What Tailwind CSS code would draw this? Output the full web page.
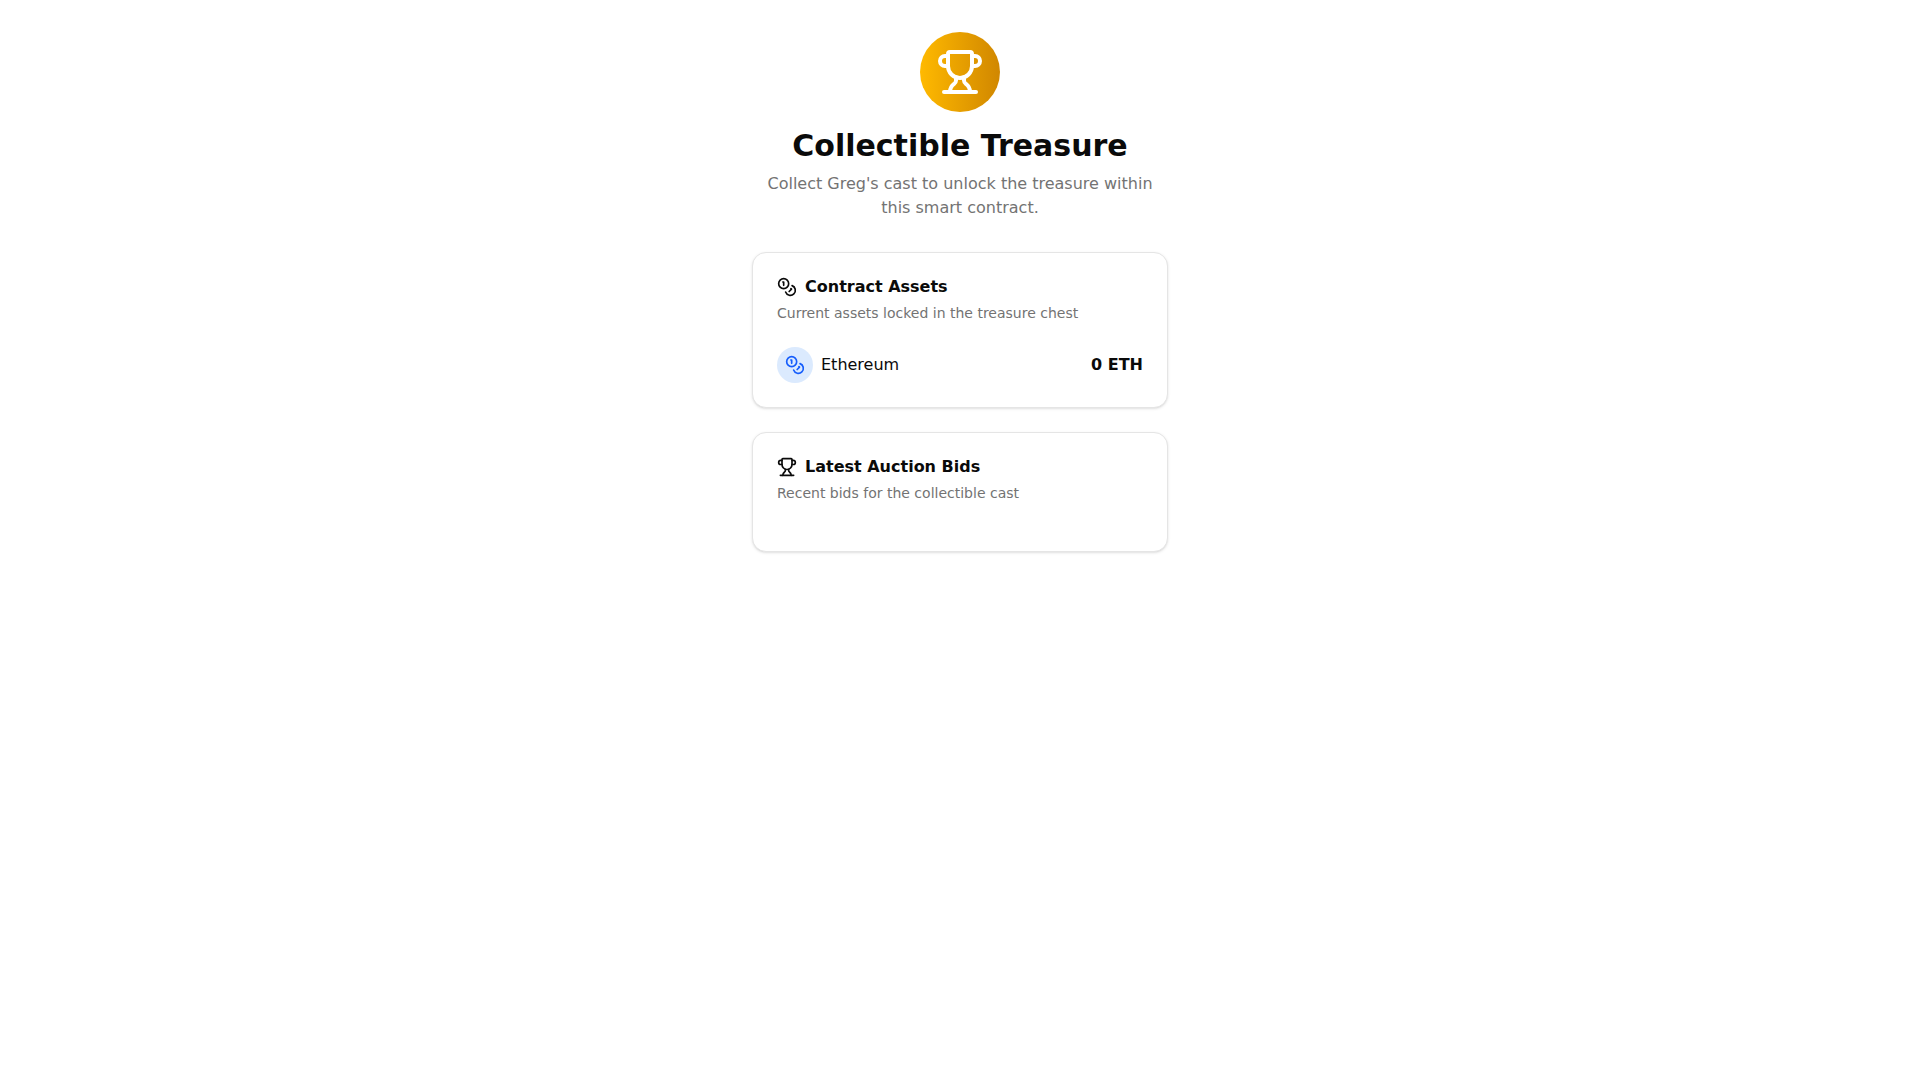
<!DOCTYPE html>
<html lang="en">
<head>
  <meta charset="UTF-8">
  <meta name="viewport" content="width=device-width, initial-scale=1.0">
  <title>Collectible Treasure</title>
  <script src="https://cdn.jsdelivr.net/npm/@tailwindcss/browser@4"></script>
</head>
<body class="bg-white text-neutral-950 font-['DejaVu_Sans',sans-serif]">
  <main class="max-w-md mx-auto px-4 py-8">
    <header class="text-center mb-8">
      <div class="w-20 h-20 mx-auto mb-4 rounded-full bg-linear-to-r from-amber-400 to-yellow-600 flex items-center justify-center">
        <svg class="w-12 h-12 text-white" viewBox="0 0 24 24" fill="none" stroke="currentColor" stroke-width="2" stroke-linecap="round" stroke-linejoin="round" aria-hidden="true">
          <path d="M10 14.66v1.626a2 2 0 0 1-.976 1.696A5 5 0 0 0 7 21.978"/>
          <path d="M14 14.66v1.626a2 2 0 0 0 .976 1.696A5 5 0 0 1 17 21.978"/>
          <path d="M18 9h1.5a1 1 0 0 0 0-5H18"/>
          <path d="M4 22h16"/>
          <path d="M6 9a6 6 0 0 0 12 0V3a1 1 0 0 0-1-1H7a1 1 0 0 0-1 1z"/>
          <path d="M6 9H4.5a1 1 0 0 1 0-5H6"/>
        </svg>
      </div>
      <h1 class="text-3xl font-bold mb-2">Collectible Treasure</h1>
      <p class="text-neutral-500">Collect Greg's cast to unlock the treasure within this smart contract.</p>
    </header>

    <section class="flex flex-col gap-6 py-6 mb-6 rounded-[14px] border border-neutral-200 bg-white shadow-sm">
      <div class="grid gap-1.5 px-6">
        <h2 class="flex items-center gap-2 font-semibold leading-none">
          <svg class="w-5 h-5" viewBox="0 0 24 24" fill="none" stroke="currentColor" stroke-width="2" stroke-linecap="round" stroke-linejoin="round" aria-hidden="true">
            <circle cx="8" cy="8" r="6"/>
            <path d="M18.09 10.37A6 6 0 1 1 10.34 18"/>
            <path d="M7 6h1v4"/>
            <path d="m16.71 13.88.7.71-2.82 2.82"/>
          </svg>
          Contract Assets
        </h2>
        <p class="text-sm text-neutral-500">Current assets locked in the treasure chest</p>
      </div>
      <div class="flex items-center justify-between px-6">
        <div class="flex items-center gap-2">
          <div class="w-9 h-9 rounded-full bg-blue-100 flex items-center justify-center">
            <svg class="w-5 h-5 text-blue-600" viewBox="0 0 24 24" fill="none" stroke="currentColor" stroke-width="2" stroke-linecap="round" stroke-linejoin="round" aria-hidden="true">
              <circle cx="8" cy="8" r="6"/>
              <path d="M18.09 10.37A6 6 0 1 1 10.34 18"/>
              <path d="M7 6h1v4"/>
              <path d="m16.71 13.88.7.71-2.82 2.82"/>
            </svg>
          </div>
          <span>Ethereum</span>
        </div>
        <span class="font-semibold">0 ETH</span>
      </div>
    </section>

    <section class="flex flex-col gap-6 py-6 rounded-[14px] border border-neutral-200 bg-white shadow-sm">
      <div class="grid gap-1.5 px-6">
        <h2 class="flex items-center gap-2 font-semibold leading-none">
          <svg class="w-5 h-5" viewBox="0 0 24 24" fill="none" stroke="currentColor" stroke-width="2" stroke-linecap="round" stroke-linejoin="round" aria-hidden="true">
            <path d="M10 14.66v1.626a2 2 0 0 1-.976 1.696A5 5 0 0 0 7 21.978"/>
            <path d="M14 14.66v1.626a2 2 0 0 0 .976 1.696A5 5 0 0 1 17 21.978"/>
            <path d="M18 9h1.5a1 1 0 0 0 0-5H18"/>
            <path d="M4 22h16"/>
            <path d="M6 9a6 6 0 0 0 12 0V3a1 1 0 0 0-1-1H7a1 1 0 0 0-1 1z"/>
            <path d="M6 9H4.5a1 1 0 0 1 0-5H6"/>
          </svg>
          Latest Auction Bids
        </h2>
        <p class="text-sm text-neutral-500">Recent bids for the collectible cast</p>
      </div>
      <!-- bids go here -->
      <div class="px-6"></div>
    </section>
  </main>
</body>
</html>
